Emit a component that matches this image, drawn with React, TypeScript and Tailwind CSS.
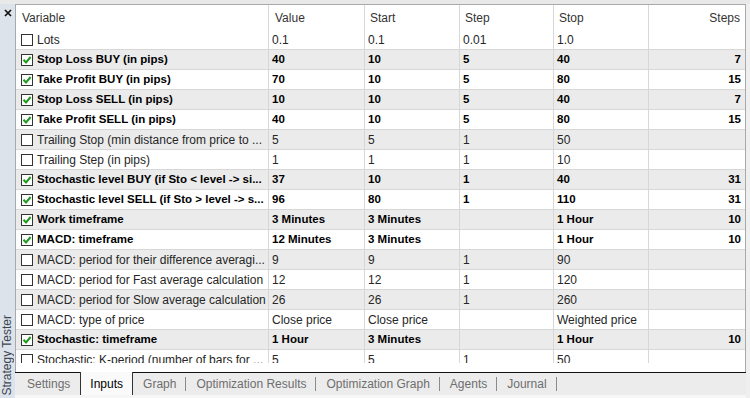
type Row = {
  name: string;
  on: boolean;
  value: string;
  start: string;
  step: string;
  stop: string;
  steps: string;
};

const rows: Row[] = [
  { name: "Lots", on: false, value: "0.1", start: "0.1", step: "0.01", stop: "1.0", steps: "" },
  { name: "Stop Loss BUY (in pips)", on: true, value: "40", start: "10", step: "5", stop: "40", steps: "7" },
  { name: "Take Profit BUY (in pips)", on: true, value: "70", start: "10", step: "5", stop: "80", steps: "15" },
  { name: "Stop Loss SELL (in pips)", on: true, value: "10", start: "10", step: "5", stop: "40", steps: "7" },
  { name: "Take Profit SELL (in pips)", on: true, value: "40", start: "10", step: "5", stop: "80", steps: "15" },
  { name: "Trailing Stop (min distance from price to ...", on: false, value: "5", start: "5", step: "1", stop: "50", steps: "" },
  { name: "Trailing Step (in pips)", on: false, value: "1", start: "1", step: "1", stop: "10", steps: "" },
  { name: "Stochastic level BUY (if Sto < level -> si...", on: true, value: "37", start: "10", step: "1", stop: "40", steps: "31" },
  { name: "Stochastic level SELL (if Sto > level -> s...", on: true, value: "96", start: "80", step: "1", stop: "110", steps: "31" },
  { name: "Work timeframe", on: true, value: "3 Minutes", start: "3 Minutes", step: "", stop: "1 Hour", steps: "10" },
  { name: "MACD: timeframe", on: true, value: "12 Minutes", start: "3 Minutes", step: "", stop: "1 Hour", steps: "10" },
  { name: "MACD: period for their difference averagi...", on: false, value: "9", start: "9", step: "1", stop: "90", steps: "" },
  { name: "MACD: period for Fast average calculation", on: false, value: "12", start: "12", step: "1", stop: "120", steps: "" },
  { name: "MACD: period for Slow average calculation", on: false, value: "26", start: "26", step: "1", stop: "260", steps: "" },
  { name: "MACD: type of price", on: false, value: "Close price", start: "Close price", step: "", stop: "Weighted price", steps: "" },
  { name: "Stochastic: timeframe", on: true, value: "1 Hour", start: "3 Minutes", step: "", stop: "1 Hour", steps: "10" },
  { name: "Stochastic: K-period (number of bars for ...", on: false, value: "5", start: "5", step: "1", stop: "50", steps: "" },
];

const tabs = ["Settings", "Inputs", "Graph", "Optimization Results", "Optimization Graph", "Agents", "Journal"];

const cols = "grid grid-cols-[253px_96px_95px_94px_95px_1fr]";

const CheckBox = ({ on }: { on: boolean }) => (
  <span className="w-[12px] h-[12px] shrink-0 border border-[#333] bg-white flex items-center justify-center">
    {on && (
      <svg width="10" height="10" viewBox="0 0 10 10">
        <path d="M1.5 4.8 L4 7.5 L8.6 2" fill="none" stroke="#1f9a1f" strokeWidth="2" />
      </svg>
    )}
  </span>
);

const Cell = ({ children, right, last }: { children?: React.ReactNode; right?: boolean; last?: boolean }) => (
  <div
    className={
      "flex items-center overflow-hidden whitespace-nowrap " +
      (last ? "" : "border-r border-[#d7d7d7] ") +
      (right ? "justify-end pr-[4px]" : "pl-[3px]")
    }
  >
    {children}
  </div>
);

export default function App() {
  return (
    <div className="w-[750px] h-[398px] bg-[#efefef] flex flex-col overflow-hidden font-['Liberation_Sans',Arial,sans-serif] text-[12px]">
      <div className="h-[4px] bg-[#e9e9e9]" />
      <div className="flex flex-1 min-h-0">
        {/* side strip */}
        <div className="w-[15px] bg-[#dde3ea] flex flex-col items-center justify-between pt-[5px] pb-[3px]">
          <svg width="8" height="8" viewBox="0 0 8 8">
            <path d="M1 1 L7 7 M7 1 L1 7" stroke="#111" strokeWidth="1.7" />
          </svg>
          <span className="[writing-mode:vertical-rl] rotate-180 text-[12px] leading-[13px] text-[#3b4654] whitespace-nowrap">
            Strategy Tester
          </span>
        </div>

        <div className="flex-1 flex flex-col min-h-0 mr-[4px]">
          {/* inputs table */}
          <div className="flex-1 min-h-0 flex flex-col bg-white border-t border-l border-r border-[#a9a9a9]">
            <div className="flex-1 min-h-0 overflow-hidden">
              <div className={cols + " h-[25px] text-[#333]"}>
                <div className="flex items-center pl-[6px] border-r border-[#d7d7d7]">Variable</div>
                <div className="flex items-center pl-[6px] border-r border-[#d7d7d7]">Value</div>
                <div className="flex items-center pl-[5px] border-r border-[#d7d7d7]">Start</div>
                <div className="flex items-center pl-[5px] border-r border-[#d7d7d7]">Step</div>
                <div className="flex items-center pl-[5px] border-r border-[#d7d7d7]">Stop</div>
                <div className="flex items-center justify-end pr-[5px]">Steps</div>
              </div>
              {rows.map((r, i) => (
                <div
                  key={i}
                  className={
                    cols +
                    " h-[20px] border-b border-[#d7d7d7] " +
                    (i % 2 === 1 ? "bg-[#ebebeb] " : "bg-white ") +
                    (r.on ? "font-bold text-[11.5px] text-black" : "text-[#262626]")
                  }
                >
                  <div className="flex items-center gap-[4px] pl-[5px] border-r border-[#d7d7d7] overflow-hidden whitespace-nowrap">
                    <CheckBox on={r.on} />
                    <span>{r.name}</span>
                  </div>
                  <Cell>{r.value}</Cell>
                  <Cell>{r.start}</Cell>
                  <Cell>{r.step}</Cell>
                  <Cell>{r.stop}</Cell>
                  <Cell right last>
                    {r.steps}
                  </Cell>
                </div>
              ))}
            </div>
            <div className="h-[9px] shrink-0 bg-white" />
          </div>

          {/* tabs */}
          <div className="h-[23px] border-t border-[#111] bg-[#ececec] flex items-stretch pl-[12px] text-[12px] text-[#6e6e6e]">
            {tabs.map((t, i) => {
              if (t === "Inputs") {
                return (
                  <div key={t} className="-mt-px bg-[#fafafa] border-x border-[#333] px-[9px] flex items-center text-black ml-[10px]">
                    {t}
                  </div>
                );
              }
              return (
                <div key={t} className="flex items-center">
                  <span className={i === 0 ? "" : "ml-[10px]"}>{t}</span>
                  {i > 1 && <span className="ml-[9px] w-px h-[14px] bg-[#8a8a8a]" />}
                </div>
              );
            })}
          </div>
          <div className="h-[3px] bg-[#f6f6f6]" />
        </div>
      </div>
    </div>
  );
}
